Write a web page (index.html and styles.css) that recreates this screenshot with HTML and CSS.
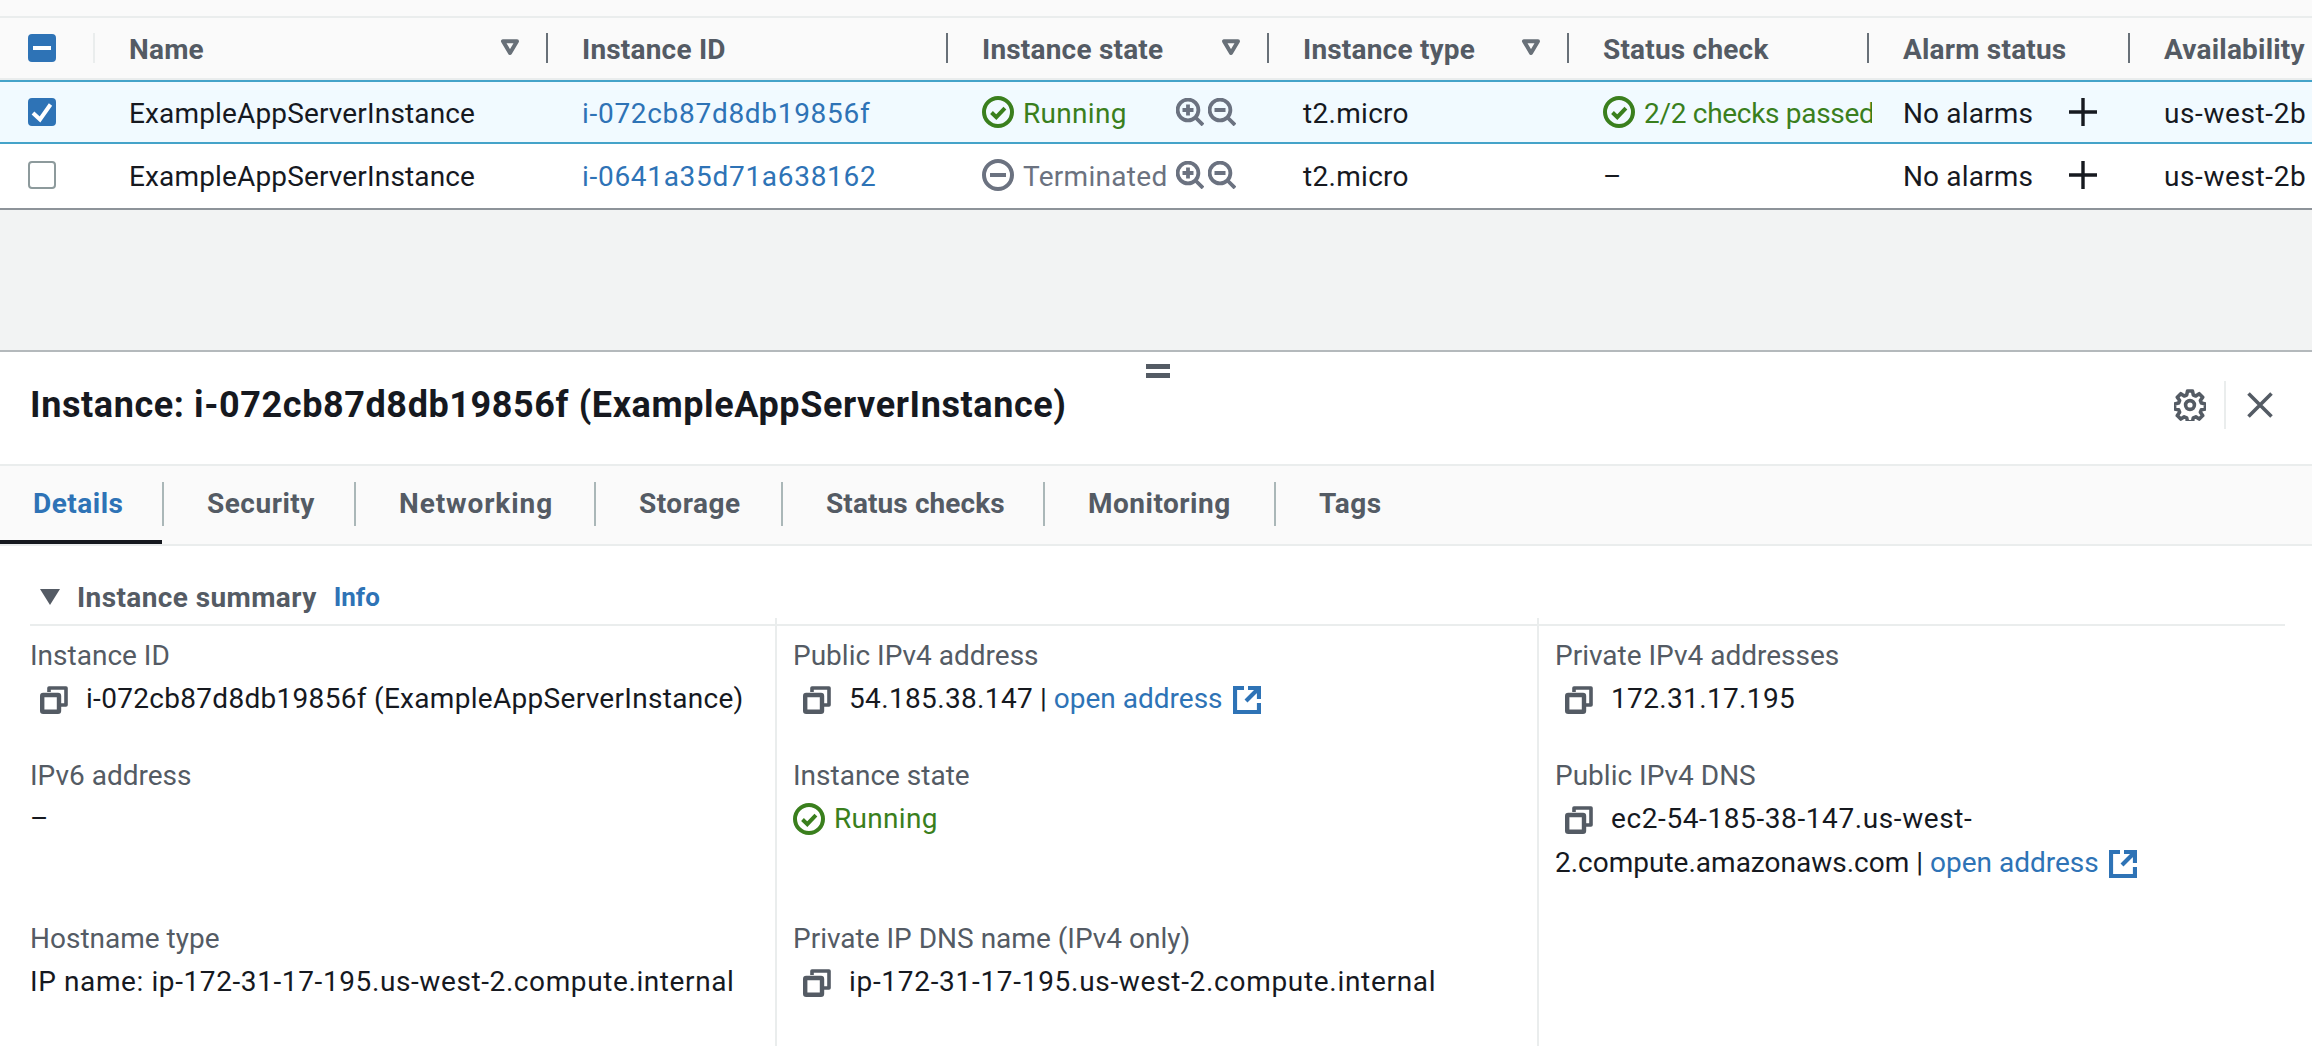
FILE: index.html
```html
<!DOCTYPE html>
<html lang="en">
<head>
<meta charset="utf-8">
<title>Instance details</title>
<link rel="stylesheet" href="styles.css">
</head>
<body>
<svg class="defs" width="0" height="0" aria-hidden="true">
  <symbol id="ok" viewBox="0 0 32 32"><circle cx="16" cy="16" r="14" fill="none" stroke="currentColor" stroke-width="4"/><path d="M9.5 16.5l4.8 4.6 8.6-9" fill="none" stroke="currentColor" stroke-width="4"/></symbol>
  <symbol id="stop" viewBox="0 0 32 32"><circle cx="16" cy="16" r="14" fill="none" stroke="currentColor" stroke-width="4"/><path d="M8 16h16" fill="none" stroke="currentColor" stroke-width="4"/></symbol>
  <symbol id="zin" viewBox="0 0 28 28"><circle cx="12" cy="12" r="10.4" fill="none" stroke="currentColor" stroke-width="3.8"/><path d="M19 19l8 8M6.5 12h11M12 6.5v11" fill="none" stroke="currentColor" stroke-width="3.8"/></symbol>
  <symbol id="zout" viewBox="0 0 28 28"><circle cx="12" cy="12" r="10.4" fill="none" stroke="currentColor" stroke-width="3.8"/><path d="M19 19l8 8M6.5 12h11" fill="none" stroke="currentColor" stroke-width="3.8"/></symbol>
  <symbol id="plus" viewBox="0 0 28 28"><path d="M14 0v28M0 14h28" fill="none" stroke="currentColor" stroke-width="3.4"/></symbol>
  <symbol id="filter" viewBox="0 0 20 20"><path d="M3 3.2h14L10 15z" fill="none" stroke="currentColor" stroke-width="4" stroke-linejoin="round"/></symbol>
  <symbol id="copy" viewBox="0 0 28 28"><path d="M9 6V2h17v17h-5" fill="none" stroke="currentColor" stroke-width="3.6" stroke-linejoin="round"/><rect x="2.2" y="9" width="16.8" height="16.8" rx="1" fill="none" stroke="currentColor" stroke-width="4.4"/></symbol>
  <symbol id="ext" viewBox="0 0 28 28"><path d="M11 2H2v24h24v-9M15 2h11v11M25 3L13 15" fill="none" stroke="currentColor" stroke-width="4.2"/></symbol>
  <symbol id="gear" viewBox="0 0 32 32"><path d="M13.5 2h5l.8 4 2.5 1 3.4-2.3 3.5 3.5-2.3 3.4 1 2.5 4 .8v5l-4 .8-1 2.5 2.3 3.4-3.5 3.5-3.4-2.3-2.5 1-.8 4h-5l-.8-4-2.5-1-3.4 2.3-3.5-3.5 2.3-3.4-1-2.5-4-.8v-5l4-.8 1-2.5-2.3-3.4 3.5-3.5 3.4 2.3 2.5-1z" fill="none" stroke="currentColor" stroke-width="3.6" stroke-linejoin="round"/><circle cx="16" cy="16" r="4.4" fill="none" stroke="currentColor" stroke-width="3.6"/></symbol>
  <symbol id="close" viewBox="0 0 26 26"><path d="M1.5 1.5l23 23M24.5 1.5l-23 23" fill="none" stroke="currentColor" stroke-width="3.6"/></symbol>
</svg>

<main class="page">
  <section class="table">
    <div class="tr thead">
      <div class="th th-check"><span class="box box-on"><span class="dash"></span></span></div>
      <div class="th"><span class="th-label">Name</span><svg class="filter"><use href="#filter"/></svg></div>
      <div class="th"><span class="th-label">Instance ID</span></div>
      <div class="th"><span class="th-label">Instance state</span><svg class="filter"><use href="#filter"/></svg></div>
      <div class="th"><span class="th-label">Instance type</span><svg class="filter"><use href="#filter"/></svg></div>
      <div class="th"><span class="th-label">Status check</span></div>
      <div class="th"><span class="th-label">Alarm status</span></div>
      <div class="th th-last"><span class="th-label">Availability</span></div>
    </div>
    <div class="tr row row-selected">
      <div class="td td-check"><span class="box box-on"><svg class="tick" viewBox="0 0 28 28"><path d="M5 15l7 6.5L22.5 6.5" fill="none" stroke="#fff" stroke-width="4"/></svg></span></div>
      <div class="td"><span class="cell-text">ExampleAppServerInstance</span></div>
      <div class="td"><a class="link id-text cell-text">i-072cb87d8db19856f</a></div>
      <div class="td td-state"><span class="status ok"><svg class="status-icon"><use href="#ok"/></svg><span class="cell-text state-text">Running</span></span><span class="zooms"><svg class="zoom-icon"><use href="#zin"/></svg><svg class="zoom-icon"><use href="#zout"/></svg></span></div>
      <div class="td"><span class="cell-text num">t2.micro</span></div>
      <div class="td td-clip"><span class="status ok"><svg class="status-icon"><use href="#ok"/></svg><span class="cell-text checks">2/2 checks passed</span></span></div>
      <div class="td td-alarm"><span class="cell-text">No alarms</span><svg class="plus"><use href="#plus"/></svg></div>
      <div class="td"><span class="cell-text num-wide">us-west-2b</span></div>
    </div>
    <div class="tr row">
      <div class="td td-check"><span class="box"></span></div>
      <div class="td"><span class="cell-text">ExampleAppServerInstance</span></div>
      <div class="td"><a class="link id-text cell-text">i-0641a35d71a638162</a></div>
      <div class="td td-state"><span class="status off"><svg class="status-icon"><use href="#stop"/></svg><span class="cell-text state-text">Terminated</span></span><span class="zooms"><svg class="zoom-icon"><use href="#zin"/></svg><svg class="zoom-icon"><use href="#zout"/></svg></span></div>
      <div class="td"><span class="cell-text num">t2.micro</span></div>
      <div class="td"><span class="cell-text">–</span></div>
      <div class="td td-alarm"><span class="cell-text">No alarms</span><svg class="plus"><use href="#plus"/></svg></div>
      <div class="td"><span class="cell-text num-wide">us-west-2b</span></div>
    </div>
  </section>

  <div class="gap"></div>

  <section class="panel">
    <span class="handle"></span>
    <header class="panel-head">
      <h2 class="panel-title">Instance: i-072cb87d8db19856f (ExampleAppServerInstance)</h2>
      <div class="panel-tools">
        <svg class="gear"><use href="#gear"/></svg>
        <span class="tool-sep"></span>
        <svg class="close"><use href="#close"/></svg>
      </div>
    </header>

    <nav class="tabs">
      <div class="tab tab-active">Details</div>
      <div class="tab">Security</div>
      <div class="tab tab-loose">Networking</div>
      <div class="tab">Storage</div>
      <div class="tab tab-tight">Status checks</div>
      <div class="tab">Monitoring</div>
      <div class="tab tab-last">Tags</div>
    </nav>

    <div class="summary-head">
      <span class="caret"></span>
      <h3 class="summary-title">Instance summary</h3>
      <a class="info">Info</a>
    </div>

    <div class="summary">
      <div class="col col-first">
        <div class="field field-a">
          <div class="label">Instance ID</div>
          <div class="value"><svg class="copy"><use href="#copy"/></svg><span class="num">i-072cb87d8db19856f (ExampleAppServerInstance)</span></div>
        </div>
        <div class="field field-b">
          <div class="label">IPv6 address</div>
          <div class="value">–</div>
        </div>
        <div class="field">
          <div class="label">Hostname type</div>
          <div class="value"><span class="num-wide">IP name: ip-172-31-17-195.us-west-2.compute.internal</span></div>
        </div>
      </div>
      <div class="col">
        <div class="field field-a">
          <div class="label">Public IPv4 address</div>
          <div class="value"><svg class="copy"><use href="#copy"/></svg><span class="ip">54.185.38.147</span> | <a class="link">open address</a><svg class="ext"><use href="#ext"/></svg></div>
        </div>
        <div class="field field-b">
          <div class="label">Instance state</div>
          <div class="value"><span class="status ok"><svg class="status-icon"><use href="#ok"/></svg><span class="num">Running</span></span></div>
        </div>
        <div class="field">
          <div class="label">Private IP DNS name (IPv4 only)</div>
          <div class="value"><svg class="copy"><use href="#copy"/></svg><span class="id-text">ip-172-31-17-195.us-west-2.compute.internal</span></div>
        </div>
      </div>
      <div class="col">
        <div class="field field-a">
          <div class="label">Private IPv4 addresses</div>
          <div class="value"><svg class="copy"><use href="#copy"/></svg><span class="ip">172.31.17.195</span></div>
        </div>
        <div class="field field-b">
          <div class="label">Public IPv4 DNS</div>
          <div class="value"><svg class="copy"><use href="#copy"/></svg><span class="num-wide">ec2-54-185-38-147.us-west-</span><br>2.compute.amazonaws.com | <a class="link">open address</a><svg class="ext"><use href="#ext"/></svg></div>
        </div>
      </div>
    </div>
  </section>
</main>
</body>
</html>
```

FILE: styles.css
```css
* { box-sizing: border-box; }
html, body { margin: 0; padding: 0; }
body {
  width: 2312px;
  height: 1046px;
  overflow: hidden;
  background: #fff;
  color: #16191f;
  font-family: Roboto, "Liberation Sans", sans-serif;
  font-size: 28px;
}
.defs { position: absolute; }
.page { display: flex; flex-direction: column; height: 1046px; }

.num { letter-spacing: 0.3px; }
.ip { letter-spacing: 0.35px; }
.num-wide { letter-spacing: 0.6px; }
.id-text { letter-spacing: 0.7px; }
.cell-text { padding-top: 2px; }

/* table */
.table { padding-top: 16px; background: #fafafa; }
.tr {
  display: grid;
  grid-template-columns: 95px 453px 400px 321px 300px 300px 261px 182px;
}
.thead {
  height: 64px;
  border-top: 2px solid #eaeded;
  border-bottom: 2px solid #eaeded;
  background: #fafafa;
  align-items: center;
}
.th {
  height: 30px;
  padding: 0 33px 0 34px;
  display: flex;
  align-items: center;
  justify-content: space-between;
  border-right: 2px solid #687078;
  color: #545b64;
  font-weight: 700;
  letter-spacing: 0.2px;
  white-space: nowrap;
}
.th-check { padding: 0 0 0 28px; border-right-color: #eaeded; }
.th-last { border-right: 0; }
.th-label { display: block; padding-top: 2px; }
.filter { width: 20px; height: 20px; flex: none; color: #687078; margin-right: -7px; }

.row { height: 64px; background: #fff; align-items: center; }
.row-selected {
  border-top: 2px solid #44a3c9;
  border-bottom: 2px solid #44a3c9;
  background: #f1faff;
}
.row:last-child { border-bottom: 2px solid #8d9399; height: 66px; padding-bottom: 2px; }
.td {
  padding: 0 0 0 34px;
  white-space: nowrap;
  overflow: hidden;
  display: flex;
  align-items: center;
  letter-spacing: 0.15px;
}
.td-check { padding-left: 28px; }
.td-state { padding-right: 33px; justify-content: space-between; }
.td-alarm { padding-right: 33px; justify-content: space-between; }
.td-clip { margin-right: -3px; }
.state-text { letter-spacing: 0.3px; }
.checks { letter-spacing: -0.3px; }

.box {
  display: flex;
  align-items: center;
  justify-content: center;
  width: 28px;
  height: 28px;
  border: 2px solid #8d9a9c;
  border-radius: 4px;
  background: #fff;
}
.box-on { background: #2e73b6; border-color: #2e73b6; }
.dash { width: 18px; height: 4px; background: #fff; }
.tick { width: 28px; height: 28px; flex: none; margin: -2px; }

.link { color: #2e73b6; text-decoration: none; }
.status { display: inline-flex; align-items: center; gap: 9px; }
.ok { color: #3a7f1d; }
.off { color: #6b7280; }
.status-icon { width: 32px; height: 32px; flex: none; }
.zooms { display: flex; gap: 4px; color: #6b7280; flex: none; }
.zoom-icon { width: 28px; height: 28px; }
.plus { width: 28px; height: 28px; flex: none; color: #16191f; }

.gap { height: 140px; flex: none; background: #f2f3f3; }

/* panel */
.panel {
  position: relative;
  flex: 1;
  display: flex;
  flex-direction: column;
  border-top: 2px solid #b4b9bc;
  background: #fff;
}
.handle {
  position: absolute;
  left: 1146px;
  top: 12px;
  width: 24px;
  height: 14px;
  border-top: 5px solid #545b64;
  border-bottom: 5px solid #545b64;
}
.panel-head {
  height: 112px;
  padding: 0 39px 7px 30px;
  display: flex;
  align-items: center;
  justify-content: space-between;
}
.panel-title { margin: 0; font-size: 36px; font-weight: 700; letter-spacing: 0.6px; }
.panel-tools { display: flex; align-items: center; color: #545b64; }
.gear { width: 32px; height: 32px; }
.tool-sep { width: 2px; height: 48px; margin: 0 21px 0 18px; background: #eaeded; }
.close { width: 26px; height: 26px; }

.tabs {
  height: 82px;
  flex: none;
  border-top: 2px solid #eaeded;
  border-bottom: 2px solid #eaeded;
  background: #fafafa;
  display: grid;
  grid-template-columns: 164px 192px 240px 187px 262px 231px 200px;
  align-items: start;
  color: #545b64;
  font-weight: 700;
  letter-spacing: 0.5px;
}
.tab {
  height: 44px;
  margin-top: 16px;
  padding-left: 43px;
  line-height: 44px;
  border-right: 2px solid #aab7b8;
  white-space: nowrap;
  position: relative;
}
.tab-last { border-right: 0; }
.tab-loose { letter-spacing: 0.9px; }
.tab-tight { letter-spacing: 0.1px; }
.tab-active { color: #2e73b6; padding-left: 33px; }
.tab-active::after {
  content: "";
  position: absolute;
  left: 0;
  right: 0;
  top: 58px;
  height: 4px;
  background: #16191f;
}

.summary-head {
  height: 72px;
  flex: none;
  padding: 30px 0 0 40px;
  display: flex;
  align-items: center;
}
.caret {
  width: 0;
  height: 0;
  border-left: 10px solid transparent;
  border-right: 10px solid transparent;
  border-top: 16px solid #545b64;
  margin-right: 17px;
}
.summary-title { margin: 0 17px 0 0; font-size: 28px; font-weight: 700; color: #545b64; letter-spacing: 0.4px; }
.info { color: #2e73b6; font-size: 26px; font-weight: 700; }

.summary {
  flex: 1;
  margin: 0 27px 0 30px;
  display: grid;
  grid-template-columns: 745px 762px 1fr;
  background: linear-gradient(#eaeded, #eaeded) 0 6px / 100% 2px no-repeat;
}
.col { padding: 20px 0 0 16px; border-left: 2px solid #eaeded; }
.col-first { padding-left: 0; border-left: 0; }
.field-a { height: 120px; }
.field-b { height: 163px; }
.label { height: 36px; line-height: 36px; color: #545b64; }
.value { margin-top: 3px; line-height: 44px; white-space: nowrap; }
.copy { width: 28px; height: 28px; margin: 0 18px 0 10px; vertical-align: -6px; color: #545b64; }
.ext { width: 28px; height: 28px; margin-left: 10px; vertical-align: -6px; color: #2e73b6; }
```
